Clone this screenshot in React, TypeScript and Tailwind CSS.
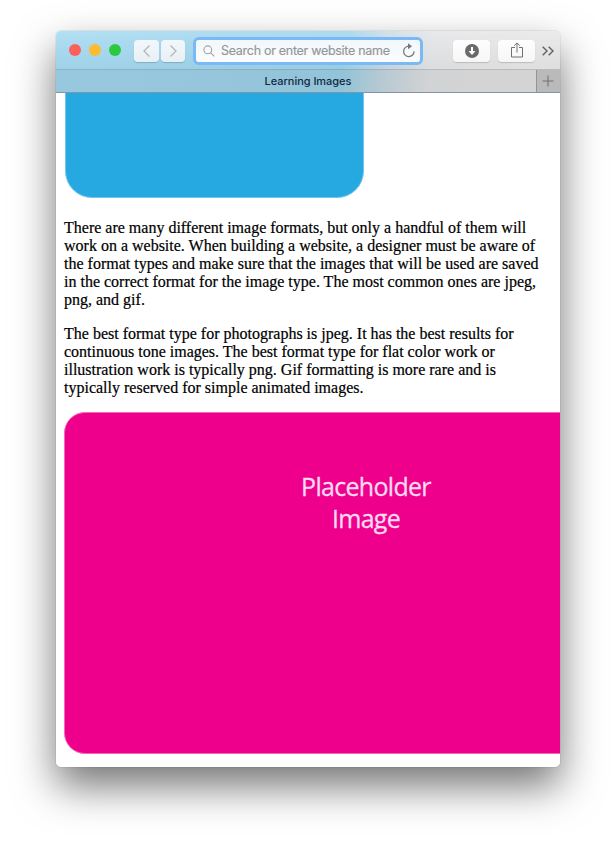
import React from "react";

const firstParagraph = [
  "There are many different image formats, but only a handful of them will",
  "work on a website. When building a website, a designer must be aware of",
  "the format types and make sure that the images that will be used are saved",
  "in the correct format for the image type. The most common ones are jpeg,",
  "png, and gif.",
];

const secondParagraph = [
  "The best format type for photographs is jpeg. It has the best results for",
  "continuous tone images. The best format type for flat color work or",
  "illustration work is typically png. Gif formatting is more rare and is",
  "typically reserved for simple animated images.",
];

function Paragraph({ lines }: { lines: string[] }) {
  return (
    <p className="whitespace-nowrap font-['Liberation_Serif',serif] text-[16px] leading-[18px] text-black [-webkit-text-stroke:0.2px_black]">
      {lines.map((line) => (
        <span key={line} className="block">
          {line}
        </span>
      ))}
    </p>
  );
}

const button =
  "flex h-[22px] items-center justify-center rounded-[4px] bg-gradient-to-b";

function Toolbar() {
  return (
    <div className="flex h-[39px] items-center border-b border-black/20 bg-gradient-to-b from-white/15 to-black/[0.03] pl-[13px] pt-px">
      <div className="-mt-px flex gap-2">
        <span className="size-3 rounded-full bg-[#fc605b]" />
        <span className="size-3 rounded-full bg-[#fdbc2f]" />
        <span className="size-3 rounded-full bg-[#2ac940]" />
      </div>
      <div className="ml-[13px] flex gap-[1.500px]">
        <div className={`${button} w-[25px] from-[#f1f7fa] to-[#e9f0f5] shadow-[0_1px_1px_rgba(0,0,0,0.18)]`}>
          <svg width="10" height="14" viewBox="0 0 10 14" fill="none" stroke="#b5b8ba" strokeWidth="1.4">
            <path d="M7.500 1.500 2 7l5.500 5.500" />
          </svg>
        </div>
        <div className={`${button} w-[24.500px] from-[#f1f7fa] to-[#e9f0f5] shadow-[0_1px_1px_rgba(0,0,0,0.18)]`}>
          <svg width="10" height="14" viewBox="0 0 10 14" fill="none" stroke="#b5b8ba" strokeWidth="1.4">
            <path d="m2.500 1.500 5.500 5.500-5.500 5.500" />
          </svg>
        </div>
      </div>
      <div className="ml-[11px] flex h-[22px] w-[224px] items-center rounded-[3px] bg-gradient-to-b from-[#f2f7fb] to-[#fbfcfd] pl-[7px] pr-[5px] shadow-[0_0_0_3px_#7ab9f5]">
        <svg className="mt-px" width="12" height="12" viewBox="0 0 12 12" fill="none" stroke="#a2a5a8" strokeWidth="1.1">
          <circle cx="4.800" cy="4.800" r="3.900" />
          <path d="m7.600 7.600 3.700 3.700" />
        </svg>
        <span className="ml-[6px] w-[172px] whitespace-nowrap pt-px font-[Inter,sans-serif] text-[12.500px] leading-[16px] tracking-[-0.290px] text-[#939699] [-webkit-text-stroke:0.15px_#939699]">
          Search or enter website name
        </span>
        <svg className="-mt-px ml-auto shrink-0" width="13" height="15" viewBox="0 0 13 15" fill="none" stroke="#747779" strokeWidth="1.2">
          <path d="M7 3.200a5.200 5.200 0 1 0 5 5" />
          <path d="M6 .2 10 3.200 6 6.200z" fill="#747779" stroke="none" />
        </svg>
      </div>
      <div className={`${button} ml-[33px] w-[37px] from-[#fefefe] to-[#f6f6f6] shadow-[0_1px_1px_rgba(0,0,0,0.16)]`}>
        <svg width="14" height="14" viewBox="0 0 14 14">
          <circle cx="7" cy="7" r="7" fill="#6a6a6b" />
          <path d="M6 3h2v4h2.500L7 11 3.500 7H6z" fill="#fff" />
        </svg>
      </div>
      <div className={`${button} ml-2 w-[37px] from-[#fefefe] to-[#f6f6f6] shadow-[0_1px_1px_rgba(0,0,0,0.16)]`}>
        <svg className="-mt-px" width="12" height="16" viewBox="0 0 12 16" fill="none" stroke="#707070" strokeWidth="1">
          <path d="M4 5.500H.5v9.500h11V5.500H8M6 10.500V1M3.200 3.700 6 .9l2.800 2.800" />
        </svg>
      </div>
      <svg className="ml-[7px] mt-px" width="12" height="10" viewBox="0 0 12 10" fill="none" stroke="#626262" strokeWidth="1.4">
        <path d="M.7.7 5 5 .7 9.300M6.700.7 11 5l-4.300 4.300" />
      </svg>
    </div>
  );
}

export default function App() {
  return (
    <div className="h-[847px] w-[616px] overflow-hidden bg-white pl-[56px] pt-[31px]">
      <div className="h-[736px] w-[504px] rounded-[5px] shadow-[0_0_1px_rgba(0,0,0,0.5),0_19px_42px_rgba(0,0,0,0.55)]">
        <div className="flex h-full flex-col overflow-hidden rounded-[5px] bg-white">
          <div className="h-[62px] shrink-0 border-b border-[#8294a5] bg-[linear-gradient(95deg,#a5daf2_0%,#9fd4eb_57%,#c8dbe5_65%,#e4e5e7_74%,#e8e7e8_100%)]">
            <Toolbar />
            <div className="flex h-[22px] bg-black/[0.08]">
              <div className="flex-1 pl-6 text-center font-[Inter,sans-serif] text-[11px] font-medium leading-[23px] tracking-[-0.040px] text-[#14283d]">
                Learning Images
              </div>
              <div className="flex w-6 items-center justify-center border-l border-black/20 bg-black/[0.12]">
                <svg className="-ml-px -mt-px" width="12" height="12" viewBox="0 0 12 12" stroke="#737373" strokeWidth="1.1">
                  <path d="M6 .5v11M.5 6h11" />
                </svg>
              </div>
            </div>
          </div>
          <div className="px-2">
            <div className="ml-[1px] h-[105px] w-[299px] rounded-b-[27px] border border-t-0 border-[#73c5ec] bg-[#26a9e1]" />
            <div className="h-[21px]" />
            <Paragraph lines={firstParagraph} />
            <div className="h-4" />
            <Paragraph lines={secondParagraph} />
            <div className="mt-[15px] flex h-[342px] w-[604px] flex-col items-center rounded-[21px] border border-[#f36abb] bg-[#ee008c] pt-[57px] text-center font-['Open_Sans',sans-serif] text-[25px] leading-[32px] tracking-[-0.700px] text-[#ffd9f0] [-webkit-text-stroke:0.3px_#ffd9f0]">
              <span>Placeholder</span>
              <span>Image</span>
            </div>
          </div>
        </div>
      </div>
    </div>
  );
}
